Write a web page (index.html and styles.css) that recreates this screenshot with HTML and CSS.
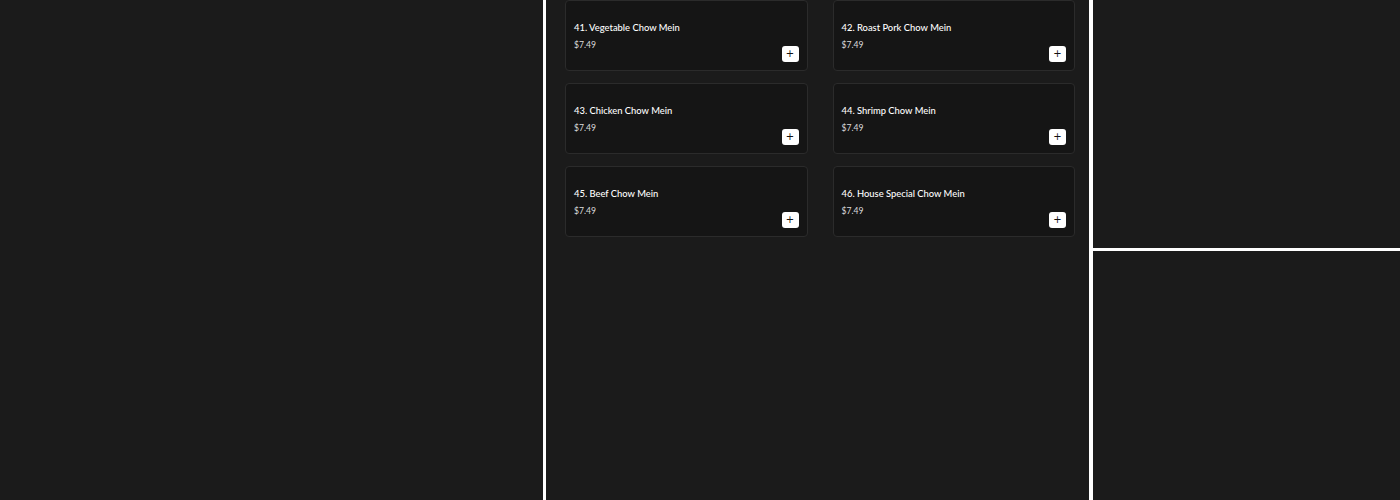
FILE: index.html
```html
<!DOCTYPE html>
<html lang="en">
<head>
    <meta charset="UTF-8">
    <meta name="viewport" content="width=device-width, initial-scale=1.0">
    <title>Menu - Chow Mein</title>
    <link rel="stylesheet" href="styles.css">
</head>
<body>
    <div class="layout">
        <div class="panel side-left"></div>
        <div class="panel menu">
            <div class="menu-grid">
                <div class="item">
                    <div class="item-info">
                        <p class="item-name">41. Vegetable Chow Mein</p>
                        <p class="item-price">$7.49</p>
                    </div>
                    <button class="add-btn">+</button>
                </div>
                <div class="item">
                    <div class="item-info">
                        <p class="item-name">42. Roast Pork Chow Mein</p>
                        <p class="item-price">$7.49</p>
                    </div>
                    <button class="add-btn">+</button>
                </div>
                <div class="item">
                    <div class="item-info">
                        <p class="item-name">43. Chicken Chow Mein</p>
                        <p class="item-price">$7.49</p>
                    </div>
                    <button class="add-btn">+</button>
                </div>
                <div class="item">
                    <div class="item-info">
                        <p class="item-name">44. Shrimp Chow Mein</p>
                        <p class="item-price">$7.49</p>
                    </div>
                    <button class="add-btn">+</button>
                </div>
                <div class="item">
                    <div class="item-info">
                        <p class="item-name">45. Beef Chow Mein</p>
                        <p class="item-price">$7.49</p>
                    </div>
                    <button class="add-btn">+</button>
                </div>
                <div class="item">
                    <div class="item-info">
                        <p class="item-name">46. House Special Chow Mein</p>
                        <p class="item-price">$7.49</p>
                    </div>
                    <button class="add-btn">+</button>
                </div>
            </div>
        </div>
        <div class="side-right">
            <div class="panel cart-top"></div>
            <div class="panel cart-bottom"></div>
        </div>
    </div>
</body>
</html>
```

FILE: styles.css
```css
/* Page */
body {
    margin: 0;
    padding: 0;
    background-color: #ffffff;
    font-family: 'Lato', 'Liberation Sans', sans-serif;
    color: #f2f2f2;
    overflow: hidden;
}

.layout {
    display: grid;
    grid-template-columns: 543px 543px 1fr;
    column-gap: 3px;
    height: 500px;
}

.panel {
    background-color: #1b1b1b;
}

/* Menu column */
.menu {
    padding: 0 14px 0 19px;
}

.menu-grid {
    display: grid;
    grid-template-columns: 1fr 1fr;
    column-gap: 25px;
    row-gap: 12px;
}

.item {
    box-sizing: border-box;
    height: 71px;
    padding: 20px 8px 8px 8px;
    background-color: #151515;
    border: 1px solid #2b2b2b;
    border-radius: 4px;
    display: flex;
    justify-content: space-between;
    align-items: flex-end;
}

.item-info {
    align-self: flex-start;
}

.item-name {
    margin: 0;
    font-size: 9.4px;
    font-weight: 500;
    line-height: 14px;
    color: #ffffff;
}

.item-price {
    margin: 3px 0 0 0;
    font-size: 8.6px;
    line-height: 14px;
    color: #dcdcdc;
}

.add-btn {
    width: 17px;
    height: 16px;
    padding: 0;
    border: none;
    border-radius: 3px;
    background-color: #ffffff;
    color: #111;
    font-family: 'DejaVu Sans', sans-serif;
    font-size: 10px;
    line-height: 16px;
    cursor: pointer;
}

/* Right column */
.side-right {
    margin-left: 1px;
    display: grid;
    grid-template-rows: 248px 1fr;
    row-gap: 3px;
}
```
